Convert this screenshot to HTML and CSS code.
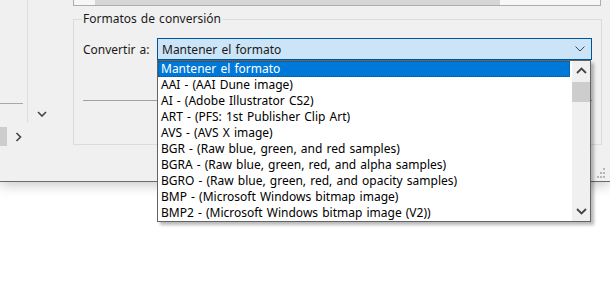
FILE: index.html
```html
<!doctype html>
<html lang="es">
<head>
<meta charset="UTF-8">
<title>Formatos de conversión</title>
<link rel="stylesheet" href="styles.css">
</head>
<body>
<div class="window">
    <div class="side">
        <div class="sideList">
            <div class="sideRule"></div>
        </div>
        <div class="sideScroll">
            <div class="sideThumb"></div>
            <svg class="sideArrow" width="8" height="10" viewBox="0 0 8 10"><path d="M1.5 1l4 4-4 4" fill="none" stroke="#444" stroke-width="1.6"/></svg>
        </div>
        <svg class="sideChevron" width="10" height="6" viewBox="0 0 10 6"><path d="M1 1l4 4 4-4" fill="none" stroke="#444" stroke-width="1.6"/></svg>
    </div>
    <div class="main">
        <div class="topBar"><div class="topFill"></div></div>
        <fieldset class="group">
            <legend>Formatos de conversión</legend>
            <div class="row">
                <label class="rowLabel">Convertir a:</label>
                <div class="combo">
                    <span>Mantener el formato</span>
                    <svg width="10" height="6" viewBox="0 0 10 6"><path d="M0.5 0.5l4.5 4.5 4.5-4.5" fill="none" stroke="#444" stroke-width="1"/></svg>
                </div>
            </div>
            <div class="groupRule"></div>
        </fieldset>
    </div>
    <svg class="grip" width="9" height="10" viewBox="0 0 9 10"><g fill="#b5b5b5"><rect x="6" y="0" width="2" height="2"/><rect x="3" y="4" width="2" height="2"/><rect x="6" y="4" width="2" height="2"/><rect x="0" y="8" width="2" height="2"/><rect x="3" y="8" width="2" height="2"/><rect x="6" y="8" width="2" height="2"/></g></svg>

    <div class="dropdown">
        <ul class="options">
            <li class="selected">Mantener el formato</li>
            <li>AAI - (AAI Dune image)</li>
            <li>AI - (Adobe Illustrator CS2)</li>
            <li>ART - (PFS: 1st Publisher Clip Art)</li>
            <li>AVS - (AVS X image)</li>
            <li>BGR - (Raw blue, green, and red samples)</li>
            <li>BGRA - (Raw blue, green, red, and alpha samples)</li>
            <li>BGRO - (Raw blue, green, red, and opacity samples)</li>
            <li>BMP - (Microsoft Windows bitmap image)</li>
            <li>BMP2 - (Microsoft Windows bitmap image (V2))</li>
        </ul>
        <div class="scroll">
            <svg width="11" height="7" viewBox="0 0 11 7"><path d="M1 6l4.5-4.5 4.5 4.5" fill="none" stroke="#444" stroke-width="1.8"/></svg>
            <div class="thumb"></div>
            <div class="track"></div>
            <svg width="11" height="7" viewBox="0 0 11 7"><path d="M1 1l4.5 4.5 4.5-4.5" fill="none" stroke="#444" stroke-width="1.8"/></svg>
        </div>
    </div>
</div>
</body>
</html>
```
FILE: styles.css
```css
*,
*:after,
*:before {
    box-sizing: border-box;
}
body {
    background: #fff;
    color: #1a1a1a;
    font-family: "Noto Sans", Arial, sans-serif;
    font-size: 12px;
    height: 283px;
    margin: 0;
    word-spacing: 1px;
}
.window {
    background: #f0f0f0;
    border-bottom: 1px solid #6a6a6a;
    box-shadow: 0 3px 12px rgba(0, 0, 0, 0.22);
    display: flex;
    height: 182px;
    position: relative;
}
/* left panel, cut off by the screenshot */
.side {
    flex: none;
    position: relative;
    width: 73px;
}
.sideList {
    border-right: 1px solid #dedede;
    height: 123px;
    padding-top: 103px;
    width: 28px;
}
.sideRule {
    border-top: 1px solid #a8a8a8;
    width: 23px;
}
.sideScroll {
    align-items: center;
    display: flex;
    height: 19px;
    margin-top: 4px;
}
.sideThumb {
    background: #cdcdcd;
    height: 19px;
    width: 7px;
}
.sideArrow {
    margin-left: 8px;
}
.sideChevron {
    left: 37px;
    position: absolute;
    top: 111px;
}
/* main area */
.main {
    flex: none;
    width: 528px;
}
.topBar {
    background: #f7f7f7;
    border: 1px solid #adadad;
    border-top: 0;
    height: 6px;
    padding-left: 21px;
    padding-right: 100px;
}
.topFill {
    background: #d6d6d6;
    height: 5px;
}
.group {
    border: 1px solid #dcdcdc;
    height: 134px;
    margin: 5px 0 0;
    padding: 11px 9px 0 9px;
}
.group legend {
    line-height: 16px;
    margin-left: -1px;
    padding: 0 1px;
}
.row {
    align-items: center;
    display: flex;
}
.rowLabel {
    width: 74px;
}
.combo {
    align-items: center;
    background: #cce4f7;
    border: 1px solid #005499;
    display: flex;
    height: 22px;
    justify-content: space-between;
    padding: 0 6px 0 4px;
    width: 435px;
}
.groupRule {
    border-top: 1px solid #a0a0a0;
    margin-top: 40px;
}
.grip {
    bottom: 3px;
    position: absolute;
    right: 4px;
}
/* popup list, lies over the window */
.dropdown {
    background: #fff;
    border: 1px solid #646464;
    box-shadow: 3px 3px 3px rgba(0, 0, 0, 0.28);
    display: flex;
    height: 162px;
    left: 157px;
    position: absolute;
    top: 60px;
    width: 434px;
    z-index: 2;
}
.options {
    flex: 1;
    list-style: none;
    margin: 0;
    padding: 0;
}
.options li {
    color: #000;
    height: 16px;
    line-height: 16px;
    padding-left: 3px;
    white-space: nowrap;
}
.options .selected {
    background: #0078d7;
    color: #fff;
    margin-right: 2px;
    outline: 1px dotted #1a4f80;
    outline-offset: -1px;
}
.scroll {
    align-items: center;
    background: #f0f0f0;
    display: flex;
    flex-direction: column;
    width: 18px;
}
.scroll svg {
    margin: 6px 0;
}
.thumb {
    background: #cdcdcd;
    height: 20px;
    margin-top: 2px;
    width: 18px;
}
.track {
    flex: 1;
}
```
